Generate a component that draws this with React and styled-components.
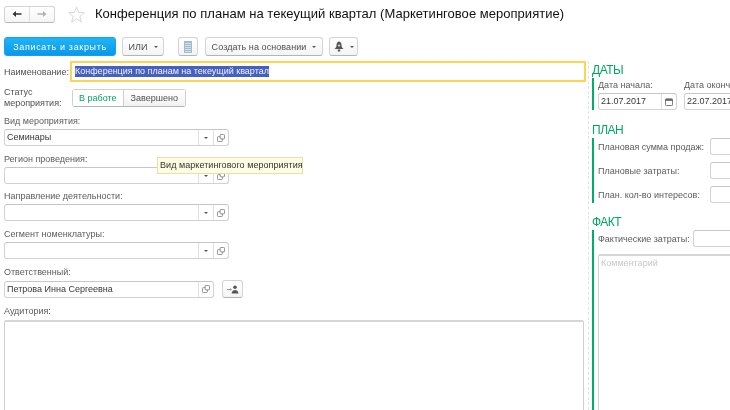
import React from 'react';
import styled, { createGlobalStyle } from 'styled-components';

const GlobalStyle = createGlobalStyle`
  html, body { margin: 0; padding: 0; background: #fff; }
  body { font-family: "Liberation Sans", Arial, sans-serif; }
`;

const Page = styled.div`
  width: 730px;
  height: 410px;
  overflow: hidden;
  display: flex;
  flex-direction: column;
  background: #fff;
  position: relative;
  color: #505050;
  font-size: 9px;
  filter: blur(0.35px);
`;

const Header = styled.div`
  display: flex;
  align-items: center;
  height: 20px;
  margin: 4px 0 0 4px;
`;

const NavGroup = styled.div`
  display: flex;
  width: 51px;
  height: 17px;
  border: 1px solid #d4d4d4;
  border-bottom-color: #b8b8b8;
  border-radius: 3px;
  box-sizing: border-box;
  background: linear-gradient(#fff, #f5f5f5);
`;

const NavBtn = styled.div`
  flex: 1;
  display: flex;
  align-items: center;
  justify-content: center;
  & + & { border-left: 1px solid #e0e0e0; }
`;

const StarWrap = styled.div`
  display: flex;
  margin-left: 13px;
`;

const Title = styled.h1`
  margin: 0 0 0 10px;
  font-size: 13px;
  line-height: 20px;
  font-weight: normal;
  color: #111;
  white-space: nowrap;
  letter-spacing: 0.03px;
`;

const Toolbar = styled.div`
  display: flex;
  height: 19px;
  margin: 13px 0 0 4px;
`;

const Btn = styled.div`
  height: 19px;
  box-sizing: border-box;
  width: ${({ $w }) => $w}px;
  margin-left: ${({ $ml }) => $ml || 0}px;
  display: flex;
  align-items: center;
  justify-content: center;
  gap: 6px;
  border: 1px solid #d4d4d4;
  border-bottom-color: #b4b4b4;
  border-radius: 3px;
  background: linear-gradient(#fff, #f4f4f4);
  font-size: 9px;
  letter-spacing: 0.07px;
  color: #505050;
  white-space: nowrap;
`;

const PrimaryBtn = styled(Btn)`
  border: 1px solid #12a2ec;
  background: linear-gradient(#1fb4f7, #0a98ea);
  color: #fff;
  letter-spacing: 0.65px;
`;

const Caret = styled.span`
  width: 0;
  height: 0;
  border-left: 2px solid transparent;
  border-right: 2px solid transparent;
  border-top: 2px solid #555;
`;

const Body = styled.div`
  display: flex;
  flex: 1;
  min-height: 0;
  margin-top: 5px;
`;

const LeftCol = styled.div`
  width: 588px;
  flex-shrink: 0;
  box-sizing: border-box;
  padding-left: 4px;
  display: flex;
  flex-direction: column;
  & > * { flex-shrink: 0; }
`;

const RightCol = styled.div`
  flex: 1;
  min-width: 0;
  border-left: 1px dashed #e2e2e2;
  box-sizing: border-box;
  padding: 2px 0 0 3px;
  display: flex;
  flex-direction: column;
  & > * { flex-shrink: 0; }
`;

const NameRow = styled.div`
  display: flex;
  align-items: center;
  height: 21px;
`;

const InlineLabel = styled.label`
  width: 66px;
  flex-shrink: 0;
  white-space: nowrap;
`;

const NameBox = styled.div`
  width: 516px;
  height: 21px;
  box-sizing: border-box;
  border: 2px solid #fcd558;
  padding-left: 3px;
  display: flex;
  align-items: center;
  color: #333;
`;

const Selected = styled.span`
  background: #4560bf;
  color: #eef1ff;
  line-height: 11px;
  white-space: nowrap;
`;

const StatusRow = styled.div`
  display: flex;
  align-items: center;
  margin-top: 4px;
  height: 23px;
`;

const StatusLabel = styled.div`
  width: 68px;
  line-height: 11px;
  flex-shrink: 0;
`;

const Toggle = styled.div`
  display: flex;
  width: 114px;
  height: 18px;
  box-sizing: border-box;
  border: 1px solid #d0d0d0;
  border-bottom-color: #b4b4b4;
  border-radius: 3px;
`;

const ToggleItem = styled.div`
  display: flex;
  align-items: center;
  justify-content: center;
  width: ${({ $active }) => ($active ? 50 : 62)}px;
  color: ${({ $active }) => ($active ? '#00a862' : '#505050')};
  background: ${({ $active }) => ($active ? '#fff' : 'linear-gradient(#fff, #f2f2f2)')};
  & + & { border-left: 1px solid #d0d0d0; }
`;

const Field = styled.div`
  display: flex;
  flex-direction: column;
  margin-top: ${({ $mt }) => $mt ?? 8}px;
`;

const FieldLabel = styled.div`
  line-height: 10px;
  height: 10px;
  margin-bottom: 3px;
  color: #5c5c5c;
`;

const InputRow = styled.div`
  display: flex;
  align-items: center;
  gap: 8px;
`;

const Input = styled.div`
  width: ${({ $w }) => $w}px;
  height: 17px;
  flex-shrink: 0;
  box-sizing: border-box;
  display: flex;
  border: 1px solid #d2d2d2;
  border-top-color: #c6c6c6;
  border-radius: 3px;
  background: #fff;
  color: #383838;
`;

const InputText = styled.div`
  flex: 1;
  min-width: 0;
  padding-left: 2px;
  line-height: 15px;
  white-space: nowrap;
`;

const InputBtn = styled.div`
  width: 14px;
  flex-shrink: 0;
  display: flex;
  align-items: center;
  justify-content: center;
  border-left: 1px solid #e0e0e0;
`;

const SmallBtn = styled(Btn)`
  height: 18px;
`;

const TextArea = styled.div`
  margin-top: 1px;
  width: 580px;
  height: 120px;
  box-sizing: border-box;
  border: 1px solid #d0d0d0;
  border-top: 2px solid #d6d6d6;
  border-radius: 2px;
`;

const SectionTitle = styled.div`
  font-size: 12px;
  line-height: 14px;
  height: 14px;
  color: #00a862;
  margin-top: ${({ $mt }) => $mt || 0}px;
  letter-spacing: -0.5px;
`;

const Section = styled.div`
  border-left: 2px solid #00ad6c;
  margin-top: 1px;
  padding-left: 4px;
  display: flex;
  flex-direction: column;
  gap: ${({ $gap }) => $gap || 0}px;
`;

const DateRow = styled.div`
  display: flex;
  gap: 7px;
`;

const DateField = styled.div`
  display: flex;
  flex-direction: column;
`;

const DateLabel = styled.div`
  line-height: 12px;
  height: 12px;
  margin: 1px 0 2px;
  color: #5c5c5c;
  white-space: nowrap;
`;

const PlanRow = styled.div`
  display: flex;
  align-items: center;
  white-space: nowrap;
`;

const PlanLabel = styled.div`
  width: ${({ $w }) => $w}px;
  flex-shrink: 0;
  color: #5c5c5c;
`;

const Comment = styled.div`
  width: 160px;
  height: 180px;
  box-sizing: border-box;
  border: 1px solid #d0d0d0;
  border-top: 2px solid #d6d6d6;
  border-radius: 2px;
  padding: 2px 2px;
  color: #c8c8c8;
`;

const Tooltip = styled.div`
  position: absolute;
  left: 157px;
  top: 157px;
  width: 146px;
  height: 17px;
  box-sizing: border-box;
  border: 1px solid #e6dfae;
  background: #fdfde3;
  color: #333;
  line-height: 15px;
  padding-left: 2px;
  letter-spacing: 0.05px;
  white-space: nowrap;
`;

const ArrowLeft = () => (
  <svg width="10" height="8" viewBox="0 0 10 8">
    <path d="M0.5 4 L4 1 V3.2 H9.5 V4.8 H4 V7 Z" fill="#333" />
  </svg>
);

const ArrowRight = () => (
  <svg width="10" height="8" viewBox="0 0 10 8">
    <path d="M9.5 4 L6 1 V3.2 H0.5 V4.8 H6 V7 Z" fill="#b0b0b0" />
  </svg>
);

const Star = () => (
  <svg width="17" height="17" viewBox="0 0 17 17">
    <path d="M8.5 1 L10.6 6.4 L16.3 6.7 L11.9 10.4 L13.3 16 L8.5 12.9 L3.7 16 L5.1 10.4 L0.7 6.7 L6.4 6.4 Z" fill="#fff" stroke="#d8d8d8" strokeWidth="1" />
  </svg>
);

const DocIcon = () => (
  <svg width="8" height="12" viewBox="0 0 8 12">
    <rect x="0" y="0" width="8" height="12" fill="#a3bccb" />
    <path d="M1 2.5H7M1 4.5H7M1 6.5H7M1 8.5H7M1 10.5H7" stroke="#dfe9f0" strokeWidth="0.8" />
  </svg>
);

const BellIcon = () => (
  <svg width="10" height="11" viewBox="0 0 10 11">
    <path d="M5 0.5 C3 1 2.5 2.5 2.5 4.5 C2.5 6 1.5 7 0.5 8 H9.5 C8.5 7 7.5 6 7.5 4.5 C7.5 2.5 7 1 5 0.5 Z" fill="#555" />
    <rect x="3.8" y="8.5" width="2.4" height="2" fill="#555" />
    <circle cx="5" cy="4.5" r="1.1" fill="#ddd" />
  </svg>
);

const CopyIcon = () => (
  <svg width="8" height="8" viewBox="0 0 9 9" fill="none" stroke="#777" strokeWidth="0.9">
    <rect x="3.5" y="0.5" width="5" height="5" rx="1" />
    <path d="M3.5 3 H1.5 A1 1 0 0 0 0.5 4 V7.5 A1 1 0 0 0 1.5 8.5 H5 A1 1 0 0 0 6 7.5 V5.5" />
  </svg>
);

const CalendarIcon = () => (
  <svg width="8" height="8" viewBox="0 0 9 9">
    <rect x="0.5" y="1" width="8" height="7.5" rx="1" fill="#fff" stroke="#666" />
    <rect x="0.5" y="1" width="8" height="2.2" fill="#666" />
  </svg>
);

const PickIcon = () => (
  <svg width="12" height="9" viewBox="0 0 12 9">
    <path d="M0 4.5H3" stroke="#999" strokeWidth="1" />
    <path d="M3 3 L5 4.5 L3 6 Z" fill="#999" />
    <circle cx="8" cy="2.2" r="1.8" fill="#555" />
    <path d="M4.5 8.5 C5 5.5 6.5 5 8 5 C9.5 5 11 5.5 11.5 8.5 Z" fill="#555" />
  </svg>
);

const SelectInput = ({ w = 225, value }) => (
  <Input $w={w}>
    <InputText>{value}</InputText>
    <InputBtn><Caret /></InputBtn>
    <InputBtn><CopyIcon /></InputBtn>
  </Input>
);

const selects = [
  { label: 'Вид мероприятия:', value: 'Семинары', mt: 7 },
  { label: 'Регион проведения:', mt: 8 },
  { label: 'Направление деятельности:', mt: 7 },
  { label: 'Сегмент номенклатуры:', mt: 8 },
];

const plans = ['Плановая сумма продаж:', 'Плановые затраты:', 'План. кол-во интересов:'];

const App = () => (
  <Page>
    <GlobalStyle />
    <Header>
      <NavGroup>
        <NavBtn><ArrowLeft /></NavBtn>
        <NavBtn><ArrowRight /></NavBtn>
      </NavGroup>
      <StarWrap><Star /></StarWrap>
      <Title>Конференция по планам на текеущий квартал (Маркетинговое мероприятие)</Title>
    </Header>
    <Toolbar>
      <PrimaryBtn $w={112}>Записать и закрыть</PrimaryBtn>
      <Btn $w={42} $ml={6}>ИЛИ <Caret /></Btn>
      <Btn $w={20} $ml={14}><DocIcon /></Btn>
      <Btn $w={118} $ml={7}>Создать на основании <Caret /></Btn>
      <Btn $w={29} $ml={6}><BellIcon /> <Caret /></Btn>
    </Toolbar>
    <Body>
      <LeftCol>
        <NameRow>
          <InlineLabel>Наименование:</InlineLabel>
          <NameBox><Selected>Конференция по планам на текеущий квартал</Selected></NameBox>
        </NameRow>
        <StatusRow>
          <StatusLabel>Статус<br />мероприятия:</StatusLabel>
          <Toggle>
            <ToggleItem $active>В работе</ToggleItem>
            <ToggleItem>Завершено</ToggleItem>
          </Toggle>
        </StatusRow>
        {selects.map((s) => (
          <Field key={s.label} $mt={s.mt}>
            <FieldLabel>{s.label}</FieldLabel>
            <SelectInput value={s.value} />
          </Field>
        ))}
        <Field>
          <FieldLabel>Ответственный:</FieldLabel>
          <InputRow>
            <Input $w={210}>
              <InputText>Петрова Инна Сергеевна</InputText>
              <InputBtn><CopyIcon /></InputBtn>
            </Input>
            <SmallBtn $w={21}><PickIcon /></SmallBtn>
          </InputRow>
        </Field>
        <Field>
          <FieldLabel>Аудитория:</FieldLabel>
          <TextArea />
        </Field>
      </LeftCol>
      <RightCol>
        <SectionTitle>ДАТЫ</SectionTitle>
        <Section>
          <DateRow>
            <DateField>
              <DateLabel>Дата начала:</DateLabel>
              <Input $w={79}>
                <InputText>21.07.2017</InputText>
                <InputBtn><CalendarIcon /></InputBtn>
              </Input>
            </DateField>
            <DateField>
              <DateLabel>Дата окончания:</DateLabel>
              <Input $w={79}>
                <InputText>22.07.2017</InputText>
              </Input>
            </DateField>
          </DateRow>
        </Section>
        <SectionTitle $mt={13}>ПЛАН</SectionTitle>
        <Section $gap={7}>
          {plans.map((p) => (
            <PlanRow key={p}>
              <PlanLabel $w={112}>{p}</PlanLabel>
              <Input $w={60} />
            </PlanRow>
          ))}
        </Section>
        <SectionTitle $mt={12}>ФАКТ</SectionTitle>
        <Section $gap={7}>
          <PlanRow>
            <PlanLabel $w={95}>Фактические затраты:</PlanLabel>
            <Input $w={60} />
          </PlanRow>
          <Comment>Комментарий</Comment>
        </Section>
      </RightCol>
    </Body>
    <Tooltip>Вид маркетингового мероприятия</Tooltip>
  </Page>
);

export default App;
